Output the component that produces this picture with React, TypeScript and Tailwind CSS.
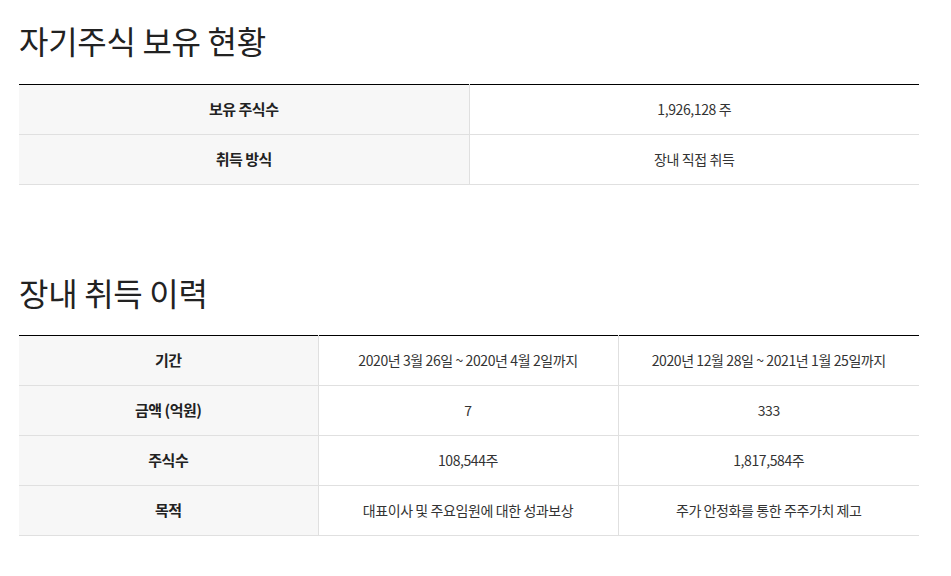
const holding = [
  { label: "보유 주식수", value: "1,926,128 주" },
  { label: "취득 방식", value: "장내 직접 취득" },
];

const history = [
  { label: "기간", a: "2020년 3월 26일 ~ 2020년 4월 2일까지", b: "2020년 12월 28일 ~ 2021년 1월 25일까지" },
  { label: "금액 (억원)", a: "7", b: "333" },
  { label: "주식수", a: "108,544주", b: "1,817,584주" },
  { label: "목적", a: "대표이사 및 주요임원에 대한 성과보상", b: "주가 안정화를 통한 주주가치 제고" },
];

export default function App() {
  return (
    <div className="bg-white text-[#222] px-[19px] pt-[20px] w-[951px] h-[576px] font-['Noto_Sans_CJK_KR','Noto_Sans',sans-serif] tracking-[-0.4px]">
      {/* 보유 현황 */}
      <h2 className="text-[32px] leading-[40px] font-normal tracking-[-0.3px] text-[#222]">자기주식 보유 현황</h2>
      <table className="w-[900px] mt-[24px] border-t border-black border-collapse text-[14px]">
        <tbody>
          {holding.map((row) => (
            <tr key={row.label} className="border-b border-[#e0e0e0] h-[50px]">
              <th className="w-[450px] bg-[#f7f7f7] border-r border-[#e0e0e0] text-[15px] tracking-[-0.5px] font-bold text-center">{row.label}</th>
              <td className="text-center text-[#333]">{row.value}</td>
            </tr>
          ))}
        </tbody>
      </table>

      {/* 장내 취득 이력 */}
      <h2 className="mt-[87px] text-[32px] leading-[40px] font-normal tracking-[-0.3px] text-[#222]">장내 취득 이력</h2>
      <table className="w-[900px] mt-[23px] border-t border-black border-collapse text-[14px] table-fixed">
        <tbody>
          {history.map((row) => (
            <tr key={row.label} className="border-b border-[#e0e0e0] h-[50px]">
              <th className="w-[299px] bg-[#f7f7f7] border-r border-[#e0e0e0] text-[15px] tracking-[-0.5px] font-bold text-center">{row.label}</th>
              <td className="w-[300px] border-r border-[#e0e0e0] text-center text-[#333]">{row.a}</td>
              <td className="text-center text-[#333]">{row.b}</td>
            </tr>
          ))}
        </tbody>
      </table>
    </div>
  );
}
